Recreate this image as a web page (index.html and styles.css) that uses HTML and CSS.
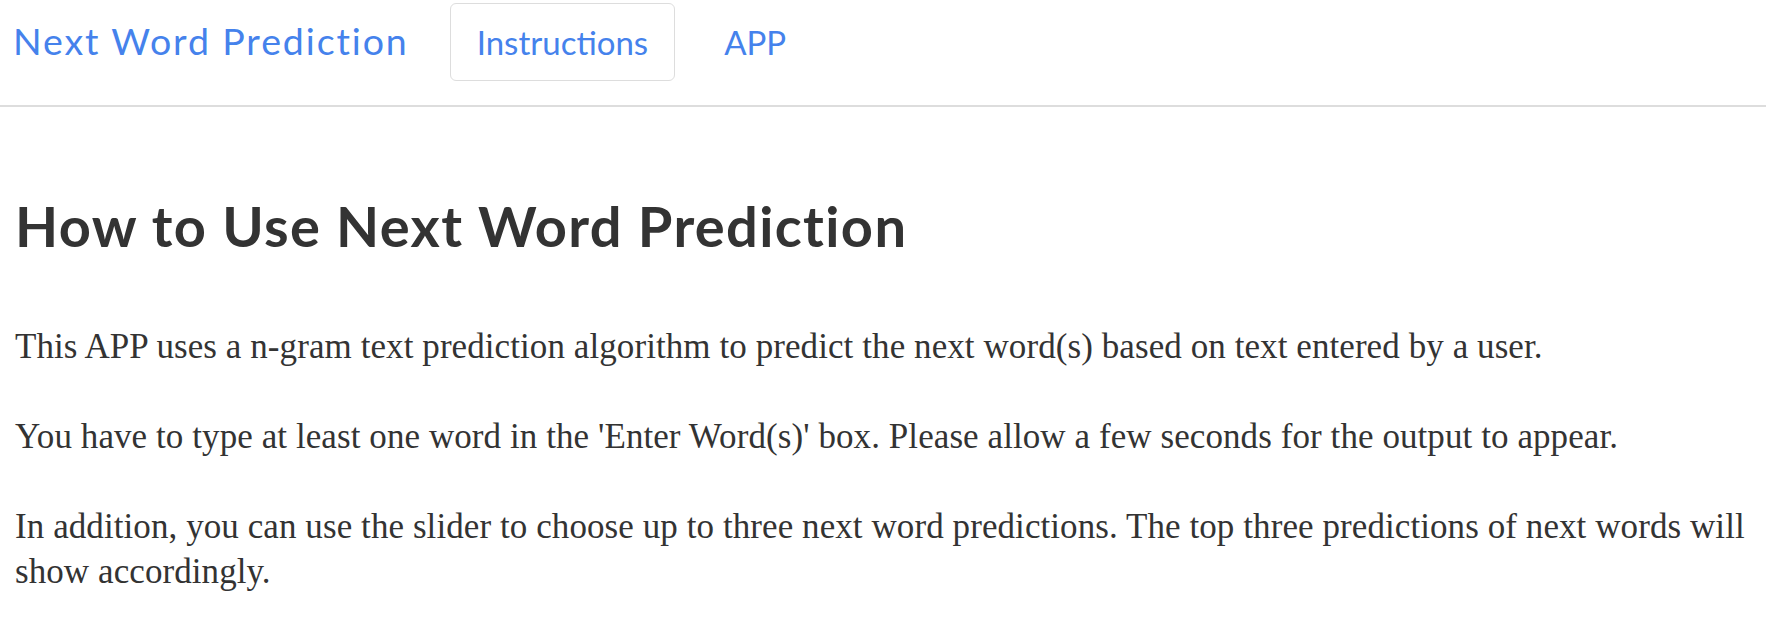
FILE: index.html
```html
<!DOCTYPE html>
<html lang="en">
<head>
<meta charset="utf-8">
<title>Next Word Prediction</title>
<link rel="stylesheet" href="styles.css">
</head>
<body>
<nav class="navbar">
  <div class="navbar-inner">
    <span class="brand">Next Word Prediction</span>
    <ul class="nav">
      <li><a class="nav-link active" href="#">Instructions</a></li>
      <li><a class="nav-link" href="#">APP</a></li>
    </ul>
  </div>
</nav>
<main class="container">
  <h2 class="title">How to Use Next Word Prediction</h2>
  <p class="text">This APP uses a n-gram text prediction algorithm to predict the next word(s) based on text entered by a user.</p>
  <p class="text">You have to type at least one word in the 'Enter Word(s)' box. Please allow a few seconds for the output to appear.</p>
  <p class="text">In addition, you can use the slider to choose up to three next word predictions. The top three predictions of next words will show accordingly.</p>
</main>
</body>
</html>
```

FILE: styles.css
```css
html, body {
  margin: 0;
  padding: 0;
  background: #ffffff;
}

body {
  font-family: "Liberation Serif", "Times New Roman", serif;
  color: #333333;
}

.navbar {
  border-bottom: 2px solid #dddddd;
  height: 105px;
  background: #ffffff;
}

.navbar-inner {
  display: flex;
  align-items: flex-start;
  padding: 0 15px 0 13px;
}

.brand {
  font-family: "Lato", "Noto Sans", sans-serif;
  font-size: 37.5px;
  color: #4582ec;
  line-height: 76px;
  margin-top: 3px;
  letter-spacing: 1.9px;
}

.nav {
  list-style: none;
  display: flex;
  margin: 3px 0 0 41px;
  padding: 0;
  gap: 22px;
}

.nav-link {
  display: block;
  font-family: "Lato", "Noto Sans", sans-serif;
  font-size: 33px;
  color: #4582ec;
  text-decoration: none;
  line-height: 76px;
  padding: 0 26px;
  border: 1px solid transparent;
  border-radius: 6px;
}

.nav-link.active {
  border-color: #dddddd;
}

.container {
  padding: 0 15px;
}

.title {
  font-family: "Lato", "Noto Sans", sans-serif;
  font-weight: 700;
  font-size: 56px;
  line-height: 1.1;
  letter-spacing: 1.35px;
  margin: 88px 0 67px;
  color: #333333;
}

.text {
  font-size: 35px;
  line-height: 45px;
  letter-spacing: 0.08px;
  margin: 0 0 45px;
}
```
